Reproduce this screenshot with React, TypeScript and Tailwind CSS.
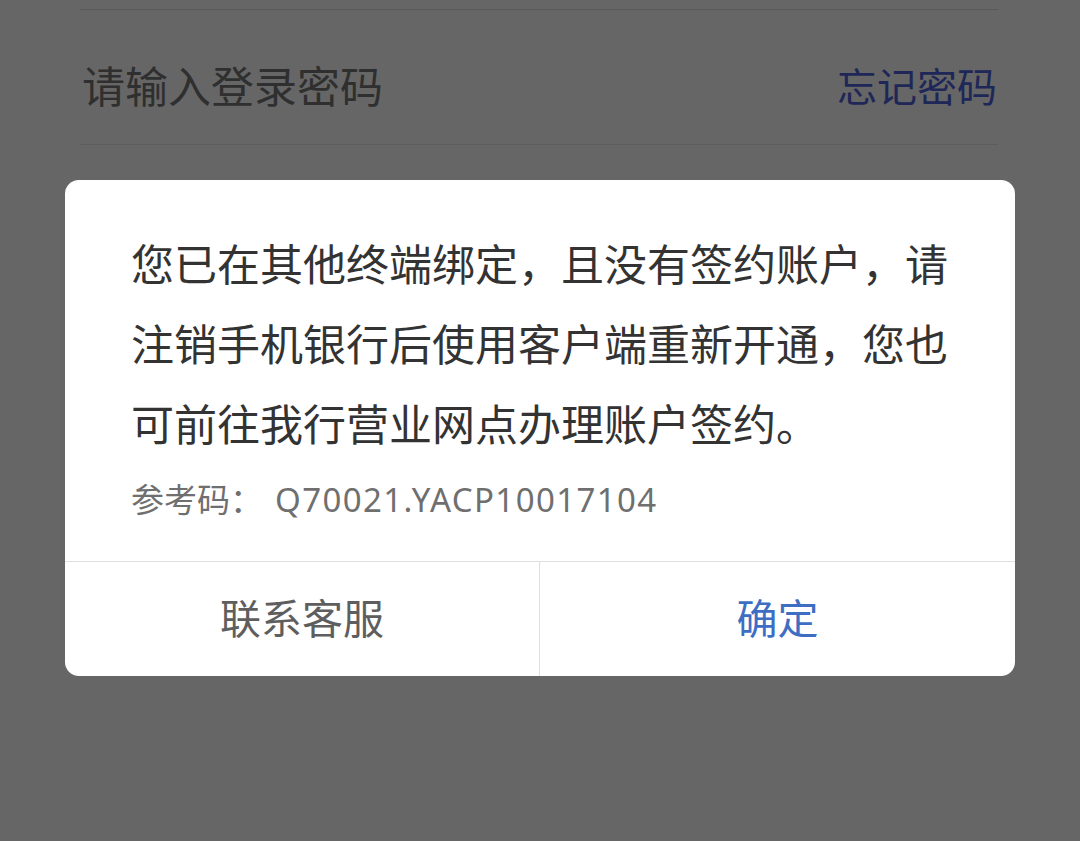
const App = () => {
  return (
    <div
      className="relative min-h-[841px] w-full overflow-hidden bg-[#666666]"
      style={{ fontFamily: '"Noto Sans", "Noto Sans CJK SC", sans-serif' }}
    >
      {/* 背景登录表单 */}
      <div className="pl-[80px] pr-[82px] pt-[9px]">
        <div className="border-t border-[#595959]" />
        <div className="flex items-center justify-between pl-[2px] pr-[1px] pt-[54px] pb-[34px]">
          <span className="text-[43px] leading-[46px] text-[#2f2f2f]">请输入登录密码</span>
          <span className="text-[40px] leading-[46px] text-[#1e2757]">忘记密码</span>
        </div>
        <div className="border-t border-[#5d5d5d]" />
      </div>

      {/* 弹窗 */}
      <div className="absolute left-[65px] top-[180px] w-[950px] overflow-hidden rounded-[14px] bg-white">
        <div className="px-[66px] pt-[45px] pb-[36px]">
          <p className="text-[43px] leading-[80px] text-[#333333]">
            您已在其他终端绑定，且没有签约账户，请注销手机银行后使用客户端重新开通，您也可前往我行营业网点办理账户签约。
          </p>
          <p className="mt-[10px] text-[33px] leading-[50px] text-[#6f6f6f]">
            参考码：<span className="ml-[12px] tracking-[1.4px]">Q70021.YACP10017104</span>
          </p>
        </div>
        <div className="flex h-[115px] border-t border-[#e0e0e0]">
          <button className="flex w-[475px] items-center justify-center border-r border-[#e0e0e0] text-[41px] text-[#5e5e5e]">
            联系客服
          </button>
          <button className="flex flex-1 items-center justify-center text-[41px] text-[#3d6ec4]">确定</button>
        </div>
      </div>
    </div>
  );
};

export default App;
